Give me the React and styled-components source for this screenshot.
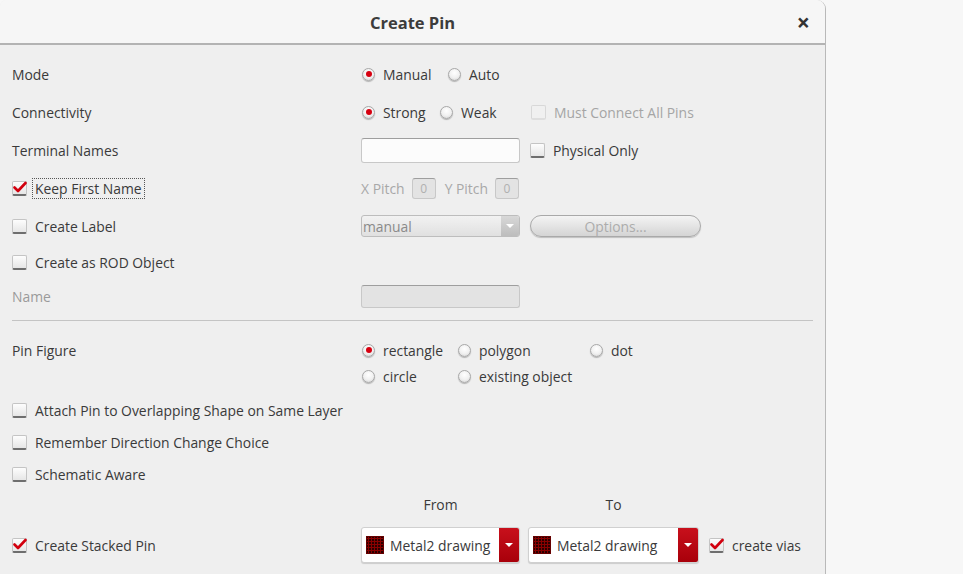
import styled, { createGlobalStyle } from "styled-components";

const Global = createGlobalStyle`
  html, body { margin: 0; padding: 0; background: #f7f7f7; }
  body { font-family: "Open Sans", "DejaVu Sans", sans-serif; font-size: 13.9px; color: #3a3a3a; }
`;

const Page = styled.div`
  width: 963px;
  height: 574px;
  overflow: hidden;
  background: #f7f7f7;
`;

const Dialog = styled.div`
  width: 826px;
  height: 574px;
  background: #efefef;
  border-right: 1px solid #b9b9b9;
  border-radius: 6px 9px 0 0;
  box-sizing: border-box;
  overflow: hidden;
`;

const TitleBar = styled.div`
  height: 43px;
  background: #f6f6f6;
  border-bottom: 2px solid #b3b3b3;
  display: flex;
  align-items: center;
  justify-content: center;
  position: relative;
`;

const Title = styled.div`
  font-weight: 700;
  font-size: 16.5px;
  color: #3c3c3c;
  padding-top: 1px;
`;

const Close = styled.div`
  position: absolute;
  right: 15px;
  top: 11px;
  font-size: 23px;
  font-weight: 700;
  color: #333;
  line-height: 22px;
`;

const Body = styled.div`
  padding-top: 10px;
`;

const Row = styled.div`
  display: grid;
  grid-template-columns: 349px 1fr;
  align-items: center;
  height: ${(p) => p.$h || 38}px;
  padding-left: 12px;
  margin-top: ${(p) => p.$mt || 0}px;
`;

const Label = styled.div`
  color: ${(p) => (p.$disabled ? "#9a9a9a" : "#3a3a3a")};
  display: flex;
  align-items: center;
  gap: 8px;
  white-space: nowrap;
`;

const Controls = styled.div`
  display: flex;
  align-items: center;
  white-space: nowrap;
`;

const Option = styled.div`
  display: flex;
  align-items: center;
  gap: 8px;
  width: ${(p) => (p.$w ? `${p.$w}px` : "auto")};
  color: ${(p) => (p.$disabled ? "#a5a5a5" : "#3a3a3a")};
`;

const RadioDot = styled.span`
  width: 11px;
  height: 11px;
  border-radius: 50%;
  border: 1px solid #a8a8a8;
  background: radial-gradient(circle at 50% 35%, #ffffff 0%, #f0f0f0 55%, #cfcfcf 100%);
  box-shadow: 0 1px 1px rgba(0, 0, 0, 0.25);
  display: inline-flex;
  align-items: center;
  justify-content: center;
  margin-left: 1px;
  &::after {
    content: "";
    width: 6px;
    height: 6px;
    border-radius: 50%;
    background: ${(p) => (p.$on ? "#d60010" : "transparent")};
  }
`;

const Box = styled.span`
  width: 13px;
  height: 12px;
  border: 1px solid ${(p) => (p.$disabled ? "#d8d8d8" : "#c4c4c4")};
  border-bottom: 2px solid ${(p) => (p.$disabled ? "#dedede" : "#6e6e6e")};
  border-radius: 2px;
  background: ${(p) => (p.$disabled ? "#f0f0f0" : "linear-gradient(#fdfdfd, #e6e6e6)")};
  position: relative;
  flex-shrink: 0;
  svg {
    position: absolute;
    left: 0px;
    top: -1px;
  }
`;

const Focus = styled.span`
  outline: 1px dotted #555;
  padding: 0 2px;
  margin-left: -2px;
`;

const Check = ({ on, disabled }) => (
  <Box $disabled={disabled}>
    {on && (
      <svg width="14" height="13" viewBox="0 0 14 13">
        <path d="M1.5 6.5 L5 10 L12.5 2" fill="none" stroke="#d2000e" strokeWidth="2.6" strokeLinecap="round" strokeLinejoin="round" />
      </svg>
    )}
  </Box>
);

const Radio = ({ on, children, w }) => (
  <Option $w={w}>
    <RadioDot $on={on} />
    <span>{children}</span>
  </Option>
);

const TextInput = styled.div`
  width: ${(p) => p.$w}px;
  height: ${(p) => p.$h || 22}px;
  box-sizing: border-box;
  border: 1px solid #c8c8c8;
  border-top-color: #9e9e9e;
  border-radius: 3px;
  background: ${(p) => (p.$disabled ? "#e3e3e3" : "#fcfcfc")};
  color: #b0b0b0;
  display: flex;
  align-items: center;
  justify-content: center;
  font-size: 12px;
`;

const Pitch = styled.span`
  color: #a8a8a8;
  margin-right: 7px;
  margin-left: ${(p) => p.$ml || 0}px;
`;

const Combo = styled.div`
  width: ${(p) => p.$w}px;
  height: ${(p) => p.$h}px;
  box-sizing: border-box;
  display: flex;
  border: 1px solid ${(p) => (p.$disabled ? "#bdbdbd" : "#d0d0d0")};
  border-radius: 3px;
  background: ${(p) => (p.$disabled ? "linear-gradient(#f2f2f2, #e0e0e0)" : "#fff")};
  overflow: hidden;
  box-shadow: ${(p) => (p.$disabled ? "none" : "0 1px 1px rgba(0,0,0,0.15)")};
`;

const ComboText = styled.div`
  flex: 1;
  display: flex;
  align-items: center;
  gap: 6px;
  padding-left: ${(p) => (p.$disabled ? 1 : 4)}px;
  color: ${(p) => (p.$disabled ? "#8a8a8a" : "#3a3a3a")};
  white-space: nowrap;
  overflow: hidden;
`;

const ComboButton = styled.div`
  width: ${(p) => (p.$disabled ? 18 : 20)}px;
  flex-shrink: 0;
  background: ${(p) => (p.$disabled ? "linear-gradient(#d8d8d8, #bdbdbd)" : "linear-gradient(#c8101c, #a8000a)")};
  display: flex;
  align-items: center;
  justify-content: center;
  &::after {
    content: "";
    border-left: 4px solid transparent;
    border-right: 4px solid transparent;
    border-top: 4px solid #fff;
  }
`;

const Swatch = styled.span`
  width: 16px;
  height: 16px;
  flex-shrink: 0;
  border: 1px solid #600;
  background-color: #2a0000;
  background-image: radial-gradient(#8a0000 1px, transparent 1.2px);
  background-size: 3px 3px;
`;

const PillButton = styled.div`
  width: 169px;
  height: 20px;
  margin-left: 10px;
  border: 1px solid #a9a9a9;
  border-radius: 11px;
  background: linear-gradient(#f4f4f4, #d4d4d4);
  color: #acacac;
  display: flex;
  align-items: center;
  justify-content: center;
  box-shadow: 0 1px 1px rgba(0, 0, 0, 0.2);
`;

const Separator = styled.div`
  height: 1px;
  background: #c4c4c4;
  margin: 7px 12px 0 12px;
`;

const Stack = styled.div`
  display: flex;
  flex-direction: column;
`;

const StackRow = styled.div`
  display: flex;
  align-items: center;
  height: 26px;
`;

const Heading = styled.div`
  width: ${(p) => p.$w}px;
  text-align: center;
  margin-right: ${(p) => p.$mr || 0}px;
`;

const Gap = styled.span`
  display: inline-block;
  width: ${(p) => p.$w}px;
`;

const LayerCombo = ({ w }) => (
  <Combo $w={w} $h={36}>
    <ComboText>
      <Swatch />
      Metal2 drawing
    </ComboText>
    <ComboButton />
  </Combo>
);

export default function App() {
  return (
    <Page>
      <Global />
      <Dialog>
        <TitleBar>
          <Title>Create Pin</Title>
          <Close>×</Close>
        </TitleBar>
        <Body>
          <Row>
            <Label>Mode</Label>
            <Controls>
              <Radio on w={86}>Manual</Radio>
              <Radio>Auto</Radio>
            </Controls>
          </Row>
          <Row>
            <Label>Connectivity</Label>
            <Controls>
              <Radio on w={78}>Strong</Radio>
              <Radio w={92}>Weak</Radio>
              <Option $disabled>
                <Check disabled />
                Must Connect All Pins
              </Option>
            </Controls>
          </Row>
          <Row>
            <Label>Terminal Names</Label>
            <Controls>
              <TextInput $w={159} $h={25} />
              <Gap $w={10} />
              <Option>
                <Check />
                Physical Only
              </Option>
            </Controls>
          </Row>
          <Row>
            <Label>
              <Check on />
              <Focus>Keep First Name</Focus>
            </Label>
            <Controls>
              <Pitch>X Pitch</Pitch>
              <TextInput $w={24} $h={21} $disabled>0</TextInput>
              <Pitch $ml={9}>Y Pitch</Pitch>
              <TextInput $w={24} $h={21} $disabled>0</TextInput>
            </Controls>
          </Row>
          <Row>
            <Label>
              <Check />
              Create Label
            </Label>
            <Controls>
              <Combo $w={159} $h={22} $disabled>
                <ComboText $disabled>manual</ComboText>
                <ComboButton $disabled />
              </Combo>
              <PillButton>Options...</PillButton>
            </Controls>
          </Row>
          <Row $h={34}>
            <Label>
              <Check />
              Create as ROD Object
            </Label>
          </Row>
          <Row $h={34}>
            <Label $disabled>Name</Label>
            <Controls>
              <TextInput $w={159} $h={23} $disabled />
            </Controls>
          </Row>
          <Separator />
          <Row $h={52} $mt={16}>
            <Label style={{ alignSelf: "start", height: 26 }}>Pin Figure</Label>
            <Stack>
              <StackRow>
                <Radio on w={96}>rectangle</Radio>
                <Radio w={132}>polygon</Radio>
                <Radio>dot</Radio>
              </StackRow>
              <StackRow>
                <Radio w={96}>circle</Radio>
                <Radio>existing object</Radio>
              </StackRow>
            </Stack>
          </Row>
          <Row $h={32} $mt={5}>
            <Label>
              <Check />
              Attach Pin to Overlapping Shape on Same Layer
            </Label>
          </Row>
          <Row $h={32}>
            <Label>
              <Check />
              Remember Direction Change Choice
            </Label>
          </Row>
          <Row $h={32}>
            <Label>
              <Check />
              Schematic Aware
            </Label>
          </Row>
          <Row $h={28}>
            <span />
            <Controls>
              <Heading $w={159} $mr={8}>From</Heading>
              <Heading $w={171}>To</Heading>
            </Controls>
          </Row>
          <Row $h={54}>
            <Label>
              <Check on />
              Create Stacked Pin
            </Label>
            <Controls>
              <LayerCombo w={159} />
              <Gap $w={8} />
              <LayerCombo w={171} />
              <Gap $w={10} />
              <Option>
                <Check on />
                create vias
              </Option>
            </Controls>
          </Row>
        </Body>
      </Dialog>
    </Page>
  );
}
